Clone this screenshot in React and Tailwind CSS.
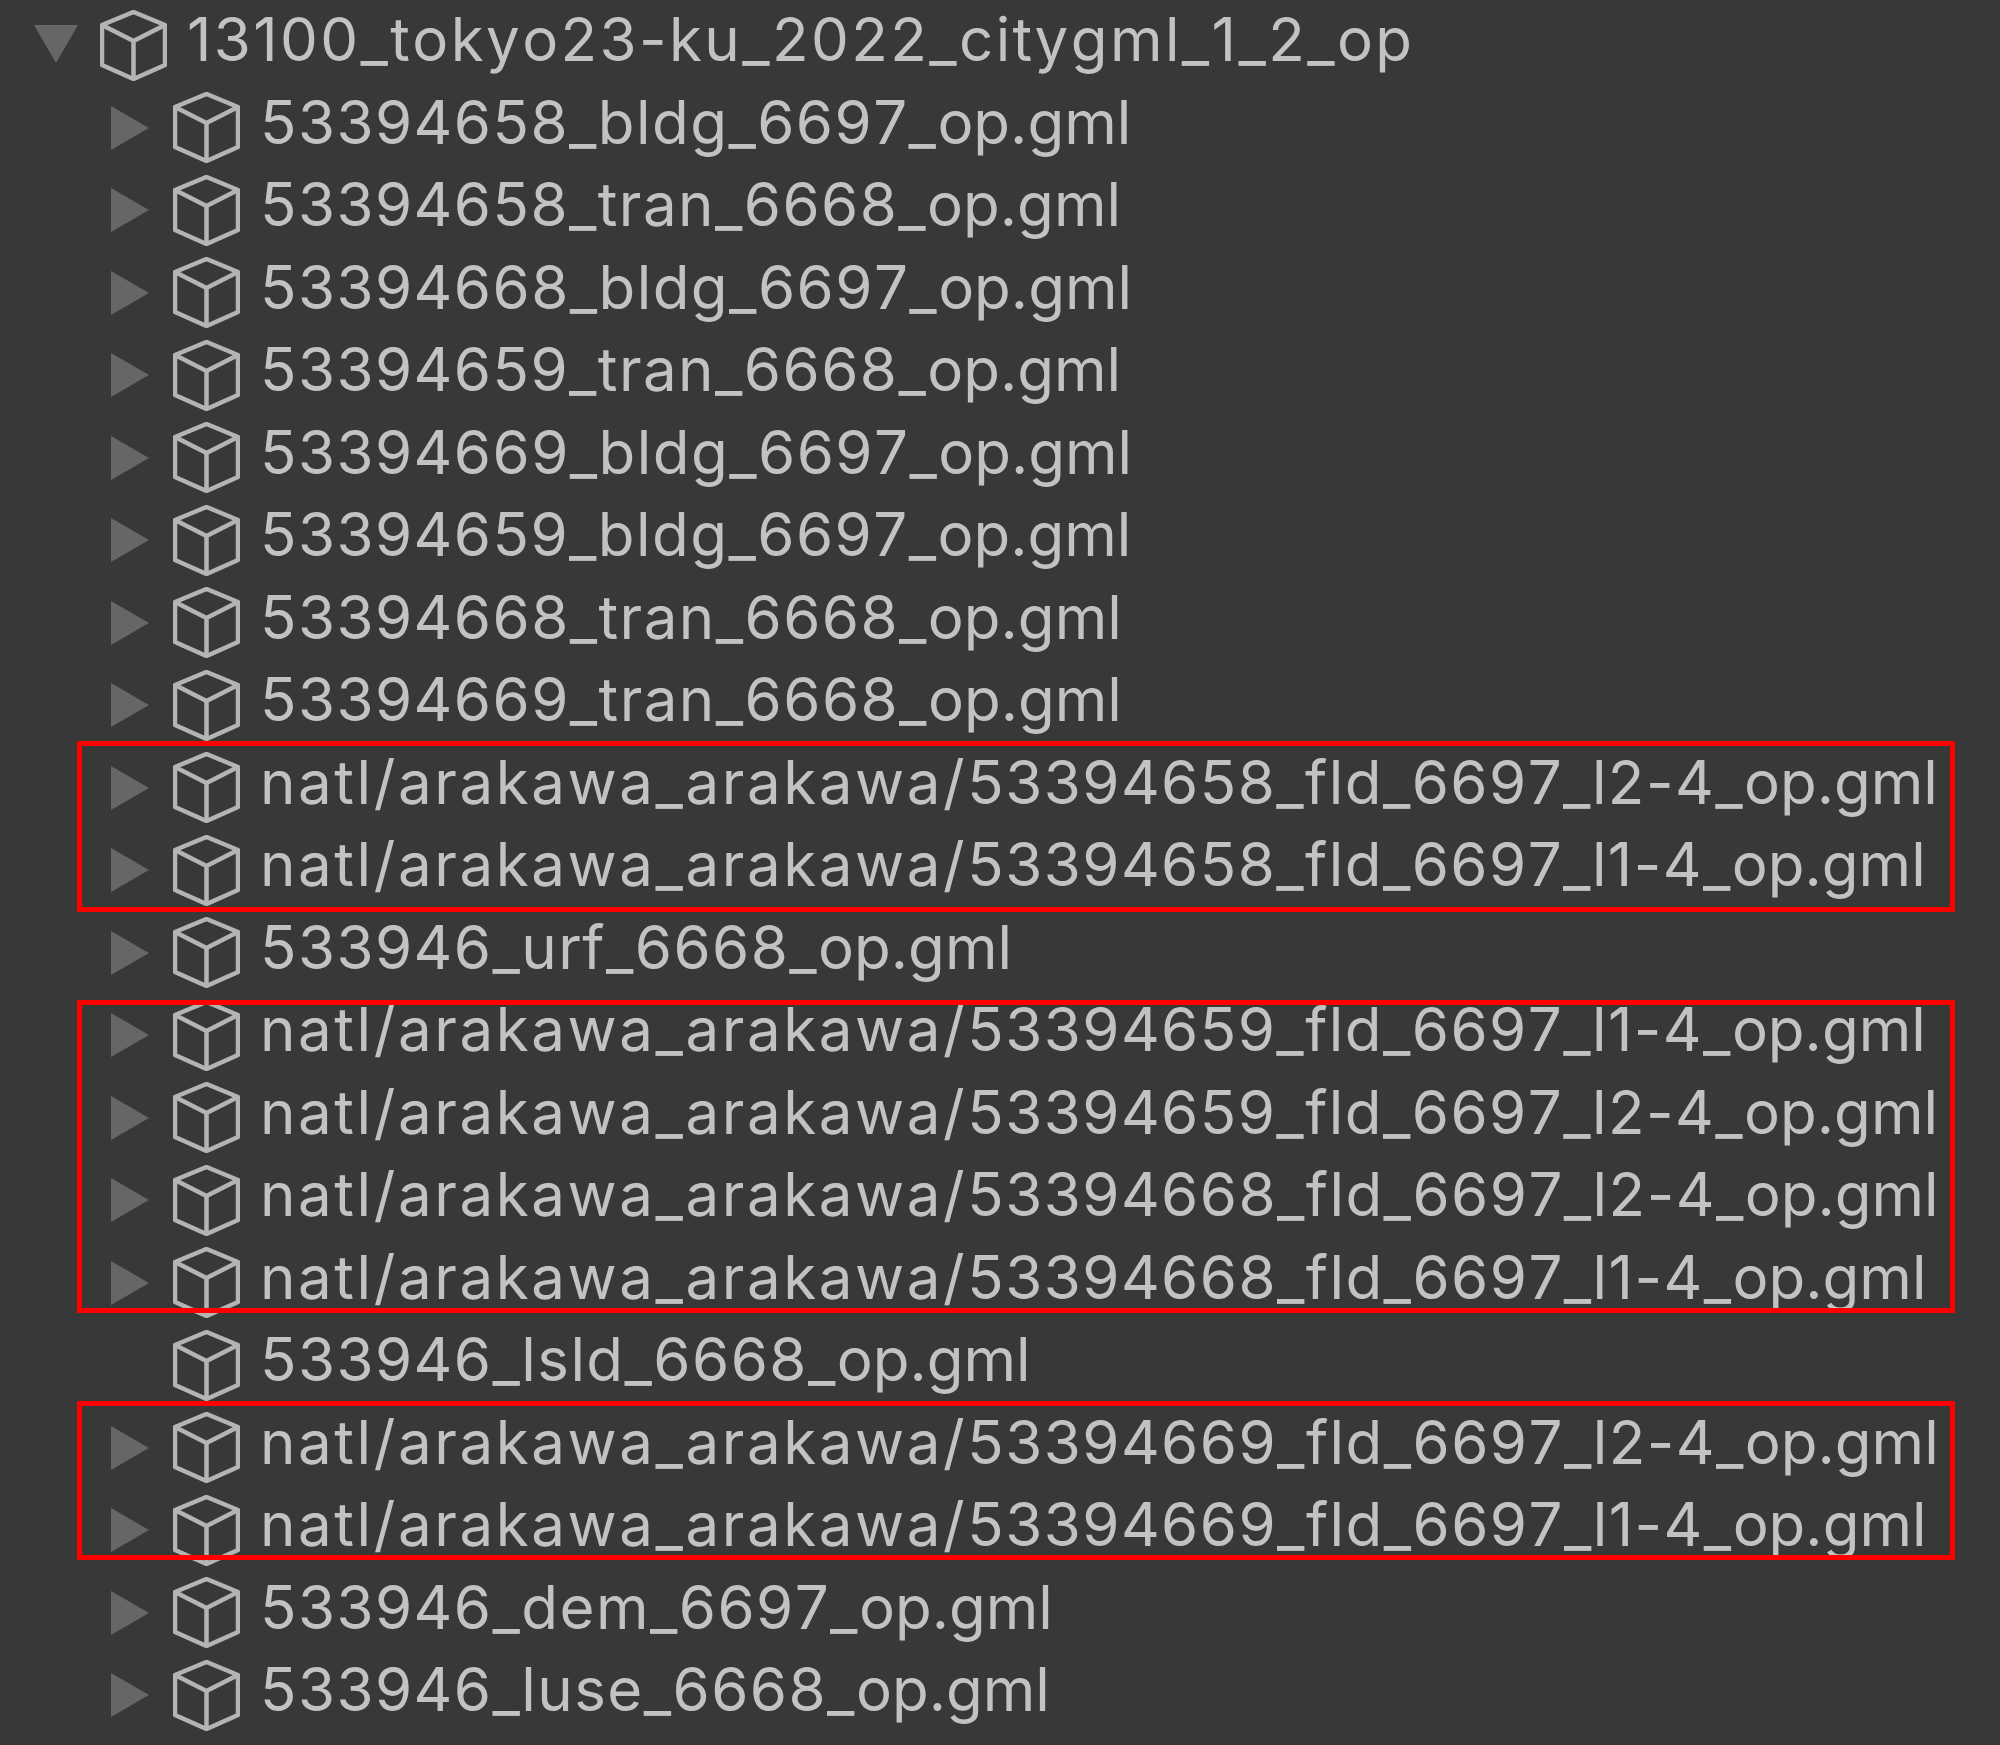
const CubeIcon = () => (
  <svg width="67" height="71" viewBox="0 0 67 71" fill="none" stroke="#b4b4b4" strokeWidth="4.5" strokeLinejoin="round" className="shrink-0 blur-[0.6px]">
    <path d="M33.5 2 L65 15 V55 L33.5 69 L2 55 V15 Z" />
    <path d="M2 15 L33.5 31 L65 15 M33.5 31 V69" />
  </svg>
);

const Arrow = ({ open, hidden }) => {
  if (hidden) return <div className="w-[44px] shrink-0" />;
  return (
    <svg width="44" height="44" viewBox="0 0 44 44" fill="#666666" className="shrink-0 blur-[0.5px]">
      {open ? <polygon points="0,2 44,2 22,40" /> : <polygon points="4,0 42,22 4,44" />}
    </svg>
  );
};

const FileName = ({ name }) => {
  const [, prefix, middle, tail] = name.match(/^(natl\/arakawa_arakawa\/)?(.*?)(op\.gml)?$/);
  return (
    <>
      {prefix && <span className="tracking-[2.6px]">{prefix}</span>}
      {middle}
      {tail && <span className="tracking-[0px]">{tail}</span>}
    </>
  );
};

const Row = ({ name, open, noArrow, root }) => (
  <div className={`flex items-center h-[82.5px] ${root ? "pl-[34px]" : "pl-[107px]"}`}>
    <Arrow open={open} hidden={noArrow} />
    <div className="w-[22px] shrink-0" />
    <CubeIcon />
    <span className={`ml-[20px] -mt-[12px] text-[60px] leading-none [font-kerning:none] whitespace-nowrap text-[#c2c2c2] blur-[0.7px] ${root ? "tracking-[2.4px]" : "tracking-[1.45px]"}`}>
      {root ? name : <FileName name={name} />}
    </span>
  </div>
);

// red annotation boxes do not line up with the rows, so each gets its own offsets
const Group = ({ names, box }) => (
  <div className="relative">
    {names.map((n) => <Row key={n} name={n} />)}
    <div className={`absolute left-[77px] w-[1878px] border-[5px] border-[#ff0000] pointer-events-none ${box}`} />
  </div>
);

const first = [
  "53394658_bldg_6697_op.gml",
  "53394658_tran_6668_op.gml",
  "53394668_bldg_6697_op.gml",
  "53394659_tran_6668_op.gml",
  "53394669_bldg_6697_op.gml",
  "53394659_bldg_6697_op.gml",
  "53394668_tran_6668_op.gml",
  "53394669_tran_6668_op.gml",
];

export default function App() {
  return (
    <div className="w-[2000px] h-[1745px] overflow-hidden bg-[#383838] pt-[4px]" style={{ fontFamily: "Inter, sans-serif" }}>
      <Row root open name="13100_tokyo23-ku_2022_citygml_1_2_op" />
      {first.map((n) => <Row key={n} name={n} />)}
      <Group
        box="-top-[6px] bottom-0"
        names={["natl/arakawa_arakawa/53394658_fld_6697_l2-4_op.gml", "natl/arakawa_arakawa/53394658_fld_6697_l1-4_op.gml"]}
      />
      <Row name="533946_urf_6668_op.gml" />
      <Group
        box="top-[6px] bottom-[11px]"
        names={[
          "natl/arakawa_arakawa/53394659_fld_6697_l1-4_op.gml",
          "natl/arakawa_arakawa/53394659_fld_6697_l2-4_op.gml",
          "natl/arakawa_arakawa/53394668_fld_6697_l2-4_op.gml",
          "natl/arakawa_arakawa/53394668_fld_6697_l1-4_op.gml",
        ]}
      />
      <Row noArrow name="533946_lsld_6668_op.gml" />
      <Group
        box="-top-[6px] bottom-[12px]"
        names={["natl/arakawa_arakawa/53394669_fld_6697_l2-4_op.gml", "natl/arakawa_arakawa/53394669_fld_6697_l1-4_op.gml"]}
      />
      <Row name="533946_dem_6697_op.gml" />
      <Row name="533946_luse_6668_op.gml" />
    </div>
  );
}
